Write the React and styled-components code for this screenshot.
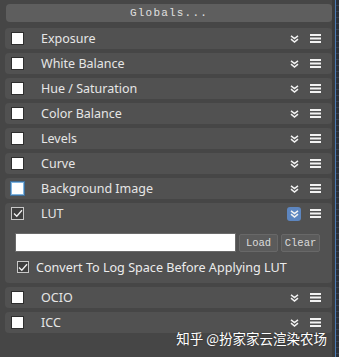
import React from "react";
import styled, { createGlobalStyle, css } from "styled-components";

const GlobalStyle = createGlobalStyle`
  html, body {
    margin: 0;
    padding: 0;
    background: #464646;
  }
  * {
    box-sizing: border-box;
  }
`;

const rows = [
  { label: "Exposure" },
  { label: "White Balance" },
  { label: "Hue / Saturation" },
  { label: "Color Balance" },
  { label: "Levels" },
  { label: "Curve" },
  { label: "Background Image", focused: true },
];

function Chevrons() {
  return (
    <svg width="9" height="8" viewBox="0 0 9 8">
      <path
        d="M1 0.8 L4.5 3.6 L8 0.8 M1 4.2 L4.5 7 L8 4.2"
        fill="none"
        stroke="#f2f2f2"
        strokeWidth="1.5"
      />
    </svg>
  );
}

function Menu() {
  return (
    <svg width="11" height="9" viewBox="0 0 11 9">
      <rect x="0" y="0" width="11" height="2" fill="#f2f2f2" />
      <rect x="0" y="3.5" width="11" height="2" fill="#f2f2f2" />
      <rect x="0" y="7" width="11" height="2" fill="#f2f2f2" />
    </svg>
  );
}

function Check() {
  return (
    <svg width="10" height="9" viewBox="0 0 10 9">
      <path d="M1 4.5 L3.8 7.2 L9 1.2" fill="none" stroke="#f0f0f0" strokeWidth="1.3" />
    </svg>
  );
}

function RowHeader({ label, checked, focused, active }) {
  return (
    <Header>
      <Box $checked={checked} $focused={focused}>
        {checked && <Check />}
      </Box>
      <Label>{label}</Label>
      <Tools>
        <Expand $active={active}>
          <Chevrons />
        </Expand>
        <Menu />
      </Tools>
    </Header>
  );
}

export default function App() {
  return (
    <>
      <GlobalStyle />
      <Page>
        <Main>
          <GlobalsButton>Globals...</GlobalsButton>
          {rows.map((r) => (
            <Row key={r.label}>
              <RowHeader label={r.label} focused={r.focused} />
            </Row>
          ))}
          <Panel>
            <RowHeader label="LUT" checked active />
            <FileLine>
              <PathInput />
              <SmallButton>Load</SmallButton>
              <SmallButton>Clear</SmallButton>
            </FileLine>
            <Option>
              <Box $checked $small>
                <Check />
              </Box>
              <OptionText>Convert To Log Space Before Applying LUT</OptionText>
            </Option>
          </Panel>
          <Row>
            <RowHeader label="OCIO" />
          </Row>
          <Row>
            <RowHeader label="ICC" />
          </Row>
        </Main>
        <Strip>
          <StripShade />
          <StripLine />
          <StripGrid />
        </Strip>
        <Watermark>知乎 @扮家家云渲染农场</Watermark>
      </Page>
    </>
  );
}

const Page = styled.div`
  position: relative;
  display: flex;
  width: 339px;
  height: 357px;
  background: #464646;
  overflow: hidden;
`;

const Main = styled.div`
  flex: 1;
  display: flex;
  flex-direction: column;
  gap: 4px;
  padding: 4px 0 0 5px;
`;

const GlobalsButton = styled.div`
  height: 18px;
  margin: 0 0 2px 1px;
  border-radius: 4px;
  background: #5e5e5e;
  color: #e0e0e0;
  font-family: "Liberation Mono", monospace;
  font-size: 11px;
  letter-spacing: 1.2px;
  line-height: 18px;
  text-align: center;
`;

const Row = styled.div`
  height: 21px;
  border-radius: 4px;
  background: #515151;
`;

const Panel = styled.div`
  height: 80px;
  border-radius: 4px;
  background: #515151;
  display: flex;
  flex-direction: column;
`;

const Header = styled.div`
  height: 21px;
  display: flex;
  align-items: center;
  padding-left: 6px;
  padding-right: 11px;
`;

const Box = styled.div`
  width: 13px;
  height: 13px;
  flex: none;
  display: flex;
  align-items: center;
  justify-content: center;
  background: #ffffff;
  border: 1px solid #2e2e2e;
  ${(p) =>
    p.$checked &&
    css`
      background: #3f3f3f;
      border: 1px solid #c8c8c8;
    `}
  ${(p) =>
    p.$focused &&
    css`
      border: 1px solid #7fb4e0;
      box-shadow: 0 0 0 1px #3f6f9a;
    `}
  ${(p) =>
    p.$small &&
    css`
      width: 12px;
      height: 12px;
    `}
`;

const Label = styled.span`
  margin-left: 17px;
  flex: 1;
  color: #e6e6e6;
  font-family: "Noto Sans", "Open Sans", sans-serif;
  font-size: 12.5px;
  line-height: 21px;
`;

const Tools = styled.div`
  display: flex;
  align-items: center;
  gap: 9px;
`;

const Expand = styled.div`
  width: 14px;
  height: 14px;
  display: flex;
  align-items: center;
  justify-content: center;
  border-radius: 3px;
  background: ${(p) => (p.$active ? "#5d86c0" : "transparent")};
`;

const FileLine = styled.div`
  display: flex;
  align-items: center;
  gap: 3px;
  margin: 9px 0 0 10px;
`;

const PathInput = styled.div`
  width: 221px;
  height: 19px;
  background: #ffffff;
  border: 1px solid #6a6a6a;
`;

const SmallButton = styled.div`
  width: 39px;
  height: 18px;
  border-radius: 2px;
  background: #5b5b5b;
  border: 1px solid #686868;
  color: #dcdcdc;
  font-family: "Liberation Mono", monospace;
  font-size: 10.5px;
  line-height: 16px;
  text-align: center;
`;

const Option = styled.div`
  display: flex;
  align-items: center;
  margin: 8px 0 0 12px;
  height: 14px;
`;

const OptionText = styled.span`
  margin-left: 7px;
  color: #ececec;
  font-family: "Noto Sans", "Open Sans", sans-serif;
  font-size: 12.6px;
`;

const Strip = styled.div`
  width: 7px;
  display: flex;
`;

const StripShade = styled.div`
  width: 3px;
  background: #3b3b3b;
`;

const StripLine = styled.div`
  width: 1px;
  background: #4b7db8;
`;

const StripGrid = styled.div`
  flex: 1;
  background: repeating-linear-gradient(
    to bottom,
    #2b3038 0px,
    #2b3038 5px,
    #3a4250 5px,
    #3a4250 6px
  );
`;

const Watermark = styled.div`
  position: absolute;
  right: 12px;
  top: 328px;
  color: #ffffff;
  font-family: "Noto Sans CJK SC", "Noto Sans", sans-serif;
  font-size: 13.5px;
  text-shadow: 0 0 2px rgba(0, 0, 0, 0.4);
  white-space: nowrap;
`;
